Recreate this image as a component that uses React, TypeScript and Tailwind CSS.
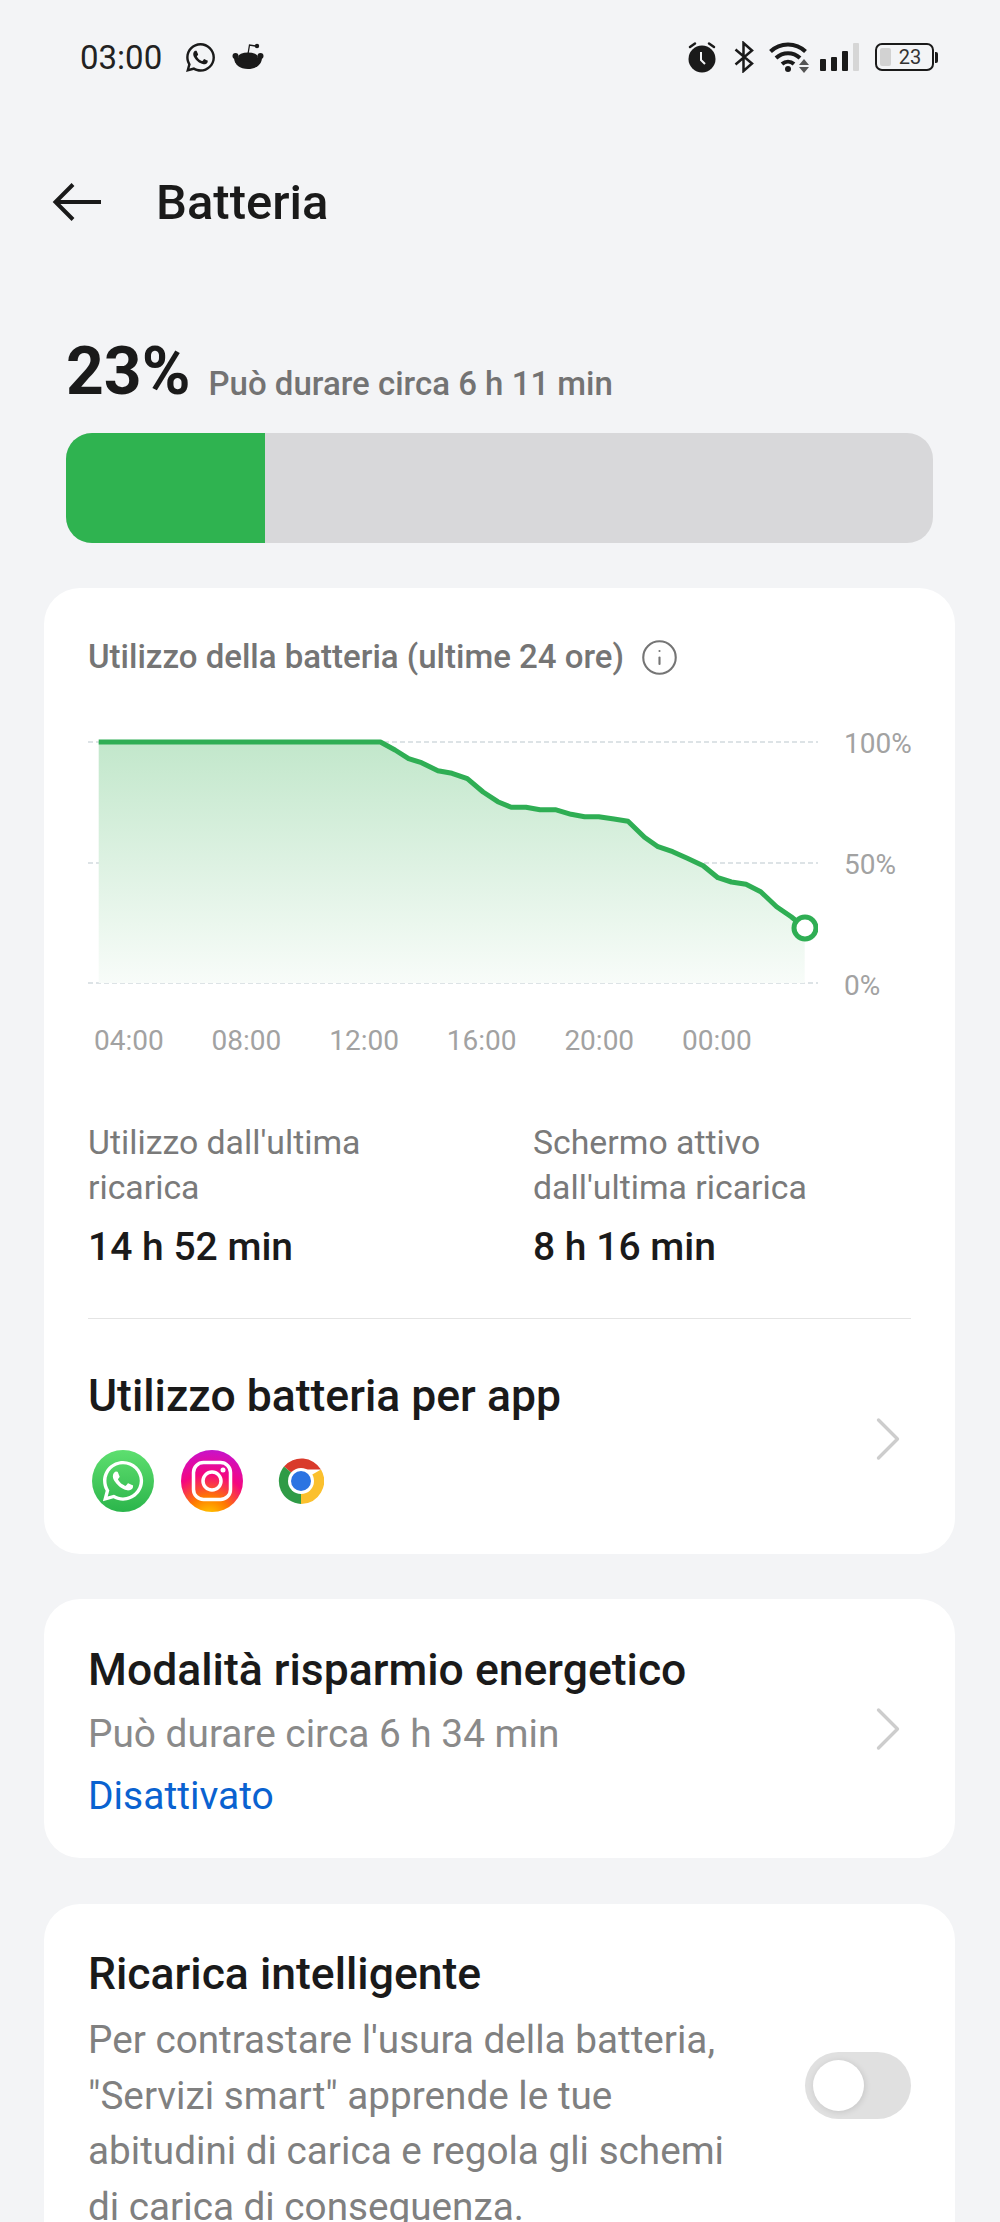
import React from 'react';
import { ChevronRight, Info } from 'lucide-react';
import { FaWhatsapp } from 'react-icons/fa';

// Battery level samples over the last 24 hours, in chart coordinates
const LEVEL_POINTS: [number, number][] = [
  [10.7, 12], [292.4, 12], [307, 20], [320.6, 28.7], [333.5, 32.7], [349.9, 40.7], [364, 43.3],
  [379.3, 48.7], [395.1, 62], [409.8, 71.7], [423.3, 77.3], [438, 77.3], [452, 79.7], [467.3, 79.7],
  [483.1, 84.3], [496.6, 86.7], [510.7, 86.7], [526, 89], [540, 91.3], [556.5, 107.3], [570, 116.7],
  [584.7, 121.7], [599.3, 128.3], [615.2, 135.7], [629.9, 147.7], [643.4, 152], [658, 154.3],
  [672.7, 161.7], [688.6, 176.7], [703.2, 186.7], [716.7, 197.7],
];

const HOURS = ['04:00', '08:00', '12:00', '16:00', '20:00', '00:00'];
const GRID_Y = [12, 133, 253];

const RedditMark = () => (
  <svg width="32" height="30" viewBox="0 0 32 30" className="text-[#1a1a1a]">
    <path d="M2 15.500h28c0 7-6 11.500-14 11.500S2 22.500 2 15.500z" fill="currentColor" />
    <ellipse cx="16" cy="15" rx="10" ry="4.500" fill="currentColor" />
    <circle cx="3.500" cy="14" r="3" fill="currentColor" />
    <circle cx="28.500" cy="14" r="3" fill="currentColor" />
    <path d="M16 12l1.500-9 6 1" fill="none" stroke="currentColor" strokeWidth="1.300" />
    <circle cx="25" cy="4" r="2.200" fill="currentColor" />
  </svg>
);

const AlarmIcon = () => (
  <svg width="30" height="32" viewBox="0 0 30 32" className="text-[#1a1a1a]">
    <circle cx="15" cy="18" r="13.500" fill="currentColor" />
    <path d="M3 6l5-3.500M27 6l-5-3.500" stroke="currentColor" strokeWidth="2.500" strokeLinecap="round" />
    <path d="M14 11v8l4 4" fill="none" stroke="#f3f4f6" strokeWidth="2" />
  </svg>
);

const BluetoothIcon = () => (
  <svg width="20" height="32" viewBox="0 0 20 32" fill="none" stroke="#1a1a1a" strokeWidth="2.500">
    <path d="M1.500 8.500L18 22.500 9.500 30V2L18 9.500 1.500 23.500" />
  </svg>
);

const WifiIcon = () => (
  <svg width="42" height="32" viewBox="0 0 42 32">
    <g fill="none" stroke="#1a1a1a" strokeWidth="4">
      <path d="M2.500 10.500C12 1 28 1 37.500 10.500" />
      <path d="M8 17c7-6.500 17-6.500 24 0" />
      <path d="M14 23c3.500-3 8.500-3 12 0" />
    </g>
    <circle cx="20" cy="28" r="3" fill="#1a1a1a" />
    <path d="M31 24l5-6 5 6zM31 26l5 6 5-6z" fill="#555" />
  </svg>
);

const SignalBars = () => (
  <div className="flex h-[28px] items-end gap-[5px]">
    <div className="h-[12px] w-[6px] rounded-[1px] bg-[#1a1a1a]" />
    <div className="h-[14px] w-[6px] rounded-[1px] bg-[#1a1a1a]" />
    <div className="h-[20px] w-[6px] rounded-[1px] bg-[#1a1a1a]" />
    <div className="h-[28px] w-[6px] rounded-[1px] bg-[#d6d6d6]" />
  </div>
);

const BatteryIcon = () => (
  <div className="flex items-center gap-[1px]">
    <div className="flex h-[28px] w-[59px] items-center rounded-[7px] border-2 border-[#1a1a1a] pl-[3px]">
      <div className="h-[18px] w-[11px] rounded-[2px] bg-[#d2d2d2]" />
      <span className="ml-[1px] w-[36px] text-center text-[20px] leading-none text-[#333]">23</span>
    </div>
    <div className="h-[11px] w-[3px] rounded-r-[2px] bg-[#1a1a1a]" />
  </div>
);

const BackArrow = () => (
  <svg width="50" height="40" viewBox="0 0 50 40" fill="none" stroke="#1a1a1a" strokeWidth="4">
    <path d="M49 20H4M21 2.500L3.500 20 21 37.500" />
  </svg>
);

const UsageChart = () => {
  const line = LEVEL_POINTS.map(([x, y]) => `${x},${y}`).join(' ');
  const area = `10.7,253 ${line} 716.7,253`;
  return (
    <svg width="730" height="270" viewBox="0 0 730 270" className="block shrink-0">
      <defs>
        <linearGradient id="levelFill" x1="0" y1="0" x2="0" y2="1">
          <stop offset="0%" stopColor="#c2e7cb" />
          <stop offset="100%" stopColor="#f8fcf9" />
        </linearGradient>
      </defs>
      {GRID_Y.map((y) => (
        <line key={y} x1="0" x2="730" y1={y} y2={y} stroke="#dde3e6" strokeWidth="2" strokeDasharray="5 3" />
      ))}
      <polygon points={area} fill="url(#levelFill)" />
      <polyline points={line} fill="none" stroke="#2fae54" strokeWidth="5" strokeLinejoin="round" />
      <circle cx="717" cy="198" r="11" fill="#fff" stroke="#2fae54" strokeWidth="5" />
    </svg>
  );
};

const WhatsAppBadge = () => (
  <div className="flex h-[62px] w-[62px] items-center justify-center rounded-full bg-linear-to-b from-[#5ddf6f] to-[#2ab54b]">
    <FaWhatsapp size={46} color="#fff" />
  </div>
);

const InstagramBadge = () => (
  <div className="flex h-[62px] w-[62px] items-center justify-center rounded-full bg-[radial-gradient(circle_at_45%_110%,#ffd600_0%,#ff7a00_28%,#f5077f_58%,#d010c0_85%,#9a20e0_100%)]">
    <svg width="42" height="42" viewBox="0 0 42 42" fill="none" stroke="#fff" strokeWidth="3.500">
      <rect x="2.500" y="2.500" width="37" height="37" rx="10" />
      <circle cx="21" cy="21" r="9" />
      <circle cx="32" cy="10" r="2.500" fill="#fff" stroke="none" />
    </svg>
  </div>
);

const ChromeBadge = () => (
  <svg width="46" height="46" viewBox="0 0 46 46">
    <path d="M23 23L6 8.500A23 23 0 0 1 43 11.500H23z" fill="#d93a2b" />
    <path d="M23 23L43 11.500A23 23 0 0 1 23 46z" fill="#fbc02d" />
    <path d="M23 23L23 46 A23 23 0 0 1 6 8.500z" fill="#2f9b46" />
    <circle cx="23" cy="23" r="13" fill="#fff" />
    <circle cx="23" cy="23" r="10" fill="#2b74e2" />
  </svg>
);

const Chevron = () => (
  <ChevronRight size={76} strokeWidth={1.05} color="#cdcdcd" className="mr-[-15px] mt-[-6px] shrink-0" />
);

const Toggle = () => (
  <div className="flex h-[67px] w-[106px] items-center rounded-full bg-[#e0e0e0] pl-[8px]">
    <div className="h-[51px] w-[51px] rounded-full bg-white shadow-[1px_1px_6px_rgba(0,0,0,0.12)]" />
  </div>
);

export default function App() {
  return (
    <div className="h-[2222px] w-[1000px] overflow-hidden bg-[#f3f4f6] font-[Roboto,sans-serif] text-[#1a1a1a]">
      {/* status bar */}
      <div className="flex h-[114px] items-center justify-between pl-[80px] pr-[62px]">
        <div className="flex items-center">
          <span className="text-[33px] leading-none text-[#222]">03:00</span>
          <FaWhatsapp size={33} color="#1a1a1a" className="ml-[22px]" />
          <div className="ml-[15px]"><RedditMark /></div>
        </div>
        <div className="flex items-center">
          <AlarmIcon />
          <div className="ml-[17px]"><BluetoothIcon /></div>
          <div className="ml-[14px]"><WifiIcon /></div>
          <div className="ml-[10px]"><SignalBars /></div>
          <div className="ml-[16px]"><BatteryIcon /></div>
        </div>
      </div>

      {/* title row */}
      <div className="flex h-[176px] items-center pl-[52px]">
        <BackArrow />
        <h1 className="ml-[54px] text-[49px] font-medium leading-none">Batteria</h1>
      </div>

      <div className="mt-[52px] flex h-[60px] items-baseline pl-[66px]">
        <span className="text-[66px] font-bold leading-[60px]">23%</span>
        <span className="ml-[18px] translate-y-[1px] text-[33px] font-medium text-[#737373]">Può durare circa 6 h 11 min</span>
      </div>

      <div className="ml-[66px] mr-[67px] mt-[31px] h-[110px] overflow-hidden rounded-[26px] bg-[#d8d8da]">
        <div className="h-full w-[199px] bg-[#2fb350]" />
      </div>

      {/* usage card */}
      <section className="ml-[44px] mr-[45px] mt-[45px] rounded-[36px] bg-white px-[44px] pb-[42px] pt-[51px]">
        <div className="flex h-[36px] items-center">
          <span className="text-[33px] font-medium text-[#757575]">Utilizzo della batteria (ultime 24 ore)</span>
          <Info size={39} strokeWidth={1.3} color="#757575" className="ml-[16px]" />
        </div>

        <div className="mt-[55px] flex">
          <UsageChart />
          <div className="ml-[26px] flex flex-col gap-[97px] pt-[2px] text-[28px] leading-[24px] text-[#a2a2a2]">
            <span>100%</span>
            <span>50%</span>
            <span>0%</span>
          </div>
        </div>

        <div className="mt-[26px] flex h-[30px] pl-[6px] text-[28px] leading-[30px] text-[#a2a2a2]">
          {HOURS.map((hour) => (
            <span key={hour} className="w-[117.600px]">{hour}</span>
          ))}
        </div>

        <div className="mt-[64px] flex">
          <div className="w-[445px]">
            <p className="text-[33.800px] leading-[45px] text-[#7a7a7a]">Utilizzo dall'ultima<br />ricarica</p>
            <p className="mt-[15px] text-[39px] font-medium leading-[44px]">14 h 52 min</p>
          </div>
          <div>
            <p className="text-[33.800px] leading-[45px] text-[#7a7a7a]">Schermo attivo<br />dall'ultima ricarica</p>
            <p className="mt-[15px] text-[39px] font-medium leading-[44px]">8 h 16 min</p>
          </div>
        </div>

        <div className="mt-[49px] h-px bg-[#e4e4e4]" />

        <div className="mt-[52px] flex items-center justify-between">
          <div>
            <h2 className="text-[44.500px] font-medium leading-[50px]">Utilizzo batteria per app</h2>
            <div className="mt-[29px] flex items-center pl-[4px]">
              <WhatsAppBadge />
              <div className="ml-[27px]"><InstagramBadge /></div>
              <div className="ml-[35px]"><ChromeBadge /></div>
            </div>
          </div>
          <Chevron />
        </div>
      </section>

      {/* power saving */}
      <section className="ml-[44px] mr-[45px] mt-[45px] flex items-center justify-between rounded-[36px] bg-white px-[44px] pb-[40px] pt-[46px]">
        <div>
          <h2 className="text-[44.500px] font-medium leading-[50px]">Modalità risparmio energetico</h2>
          <p className="mt-[17px] text-[38.800px] leading-[44px] text-[#8a8a8a]">Può durare circa 6 h 34 min</p>
          <p className="mt-[18px] text-[39px] leading-[44px] text-[#0a62d0]">Disattivato</p>
        </div>
        <Chevron />
      </section>

      {/* smart charging */}
      <section className="ml-[44px] mr-[45px] mt-[46px] flex items-start justify-between rounded-[36px] bg-white px-[44px] pb-[40px] pt-[45px]">
        <div>
          <h2 className="text-[44.500px] font-medium leading-[50px]">Ricarica intelligente</h2>
          <p className="mt-[13px] text-[38.700px] leading-[55.500px] text-[#808080]">
            Per contrastare l'usura della batteria,<br />
            "Servizi smart" apprende le tue<br />
            abitudini di carica e regola gli schemi<br />
            di carica di conseguenza.
          </p>
        </div>
        <div className="mt-[103px]"><Toggle /></div>
      </section>
    </div>
  );
}
